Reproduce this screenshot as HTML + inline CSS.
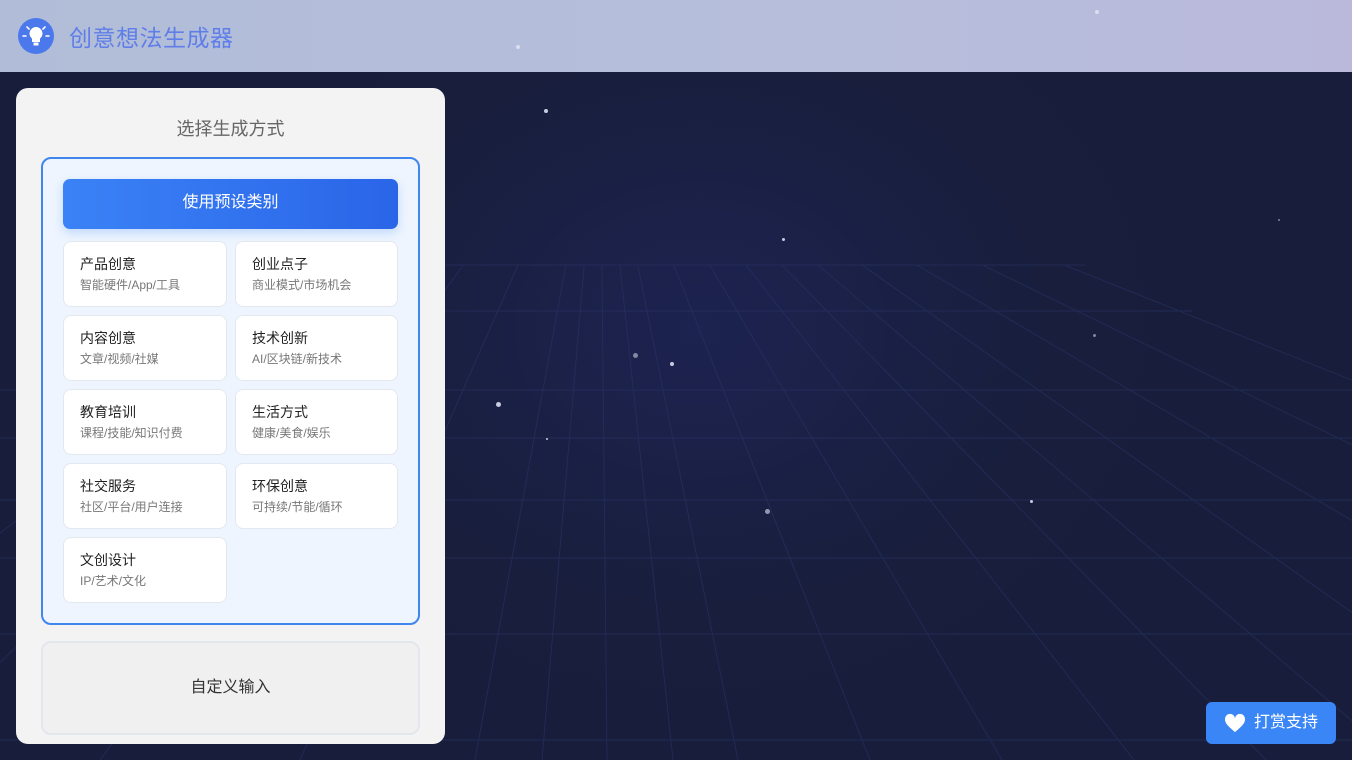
<!DOCTYPE html>
<html><head><meta charset="utf-8"><style>
*{margin:0;padding:0;box-sizing:border-box}
body{width:1352px;height:760px;overflow:hidden;font-family:"Liberation Sans","Noto Sans CJK SC",sans-serif;background:radial-gradient(ellipse 500px 400px at 700px 330px,#1d2350,#181e3c 70%,#171d3a);position:relative}
.hdr{position:absolute;left:0;top:0;width:1352px;height:72px;background:linear-gradient(90deg,#b1bdd8,#b6bedb 60%,#bab9dc)}
.logo{position:absolute;left:18px;top:18px;width:36px;height:36px;border-radius:50%;background:#4b78ea}
.title{position:absolute;left:69px;top:19px;font-size:23px;color:#5f7ee8;letter-spacing:0.5px}
.panel{position:absolute;left:16px;top:88px;width:429px;height:656px;background:#f3f3f3;border-radius:12px}
.ph{position:absolute;top:115px;left:16px;width:429px;text-align:center;font-size:18px;color:#666}
.box{position:absolute;left:41px;top:157px;width:379px;height:468px;border:2px solid #3f86ee;border-radius:10px;background:#eef5fe}
.btn{position:absolute;left:63px;top:179px;width:335px;height:50px;border-radius:7px;background:linear-gradient(90deg,#3b82f6,#2a65e8);color:#fff;font-size:16px;text-align:center;line-height:48px;box-shadow:0 4px 10px rgba(59,130,246,.25)}
.c{position:absolute;width:164px;height:66px;background:#fff;border:1px solid #e3e8ef;border-radius:8px;padding:14px 0 0 16px}
.c b{display:block;font-weight:normal;font-size:14px;color:#222;line-height:16px}
.c i{display:block;font-style:normal;font-size:12px;color:#777;margin-top:6px;line-height:14px}
.cust{position:absolute;left:41px;top:641px;width:379px;height:94px;border:2px solid #e3e6ec;border-radius:10px;background:#f0f0f1;text-align:center;line-height:90px;font-size:16px;color:#333}
.tip{position:absolute;left:1206px;top:702px;width:130px;height:42px;border-radius:6px;background:#3b86f6;color:#fff;font-size:16px;line-height:42px;padding-left:48px}
.dot{position:absolute;border-radius:50%;background:#c8cce0}
</style></head><body>
<svg width="1352" height="760" style="position:absolute;left:0;top:0" stroke="#2a3366" stroke-width="1" opacity="0.6">
<defs><clipPath id="cp"><rect x="0" y="265" width="1352" height="495"/></clipPath></defs>
<g>
<line x1="445" y1="265" x2="1085" y2="265"/>
<line x1="445" y1="311" x2="1192" y2="311"/>
<line x1="0" y1="390" x2="1352" y2="390"/>
<line x1="0" y1="438" x2="1352" y2="438"/>
<line x1="0" y1="500" x2="1352" y2="500"/>
<line x1="0" y1="558" x2="1352" y2="558"/>
<line x1="0" y1="634" x2="1352" y2="634"/>
<line x1="0" y1="740" x2="1352" y2="740"/>
</g>
<g clip-path="url(#cp)">
<line x1="600" y1="79" x2="-300" y2="760"/>
<line x1="600" y1="79" x2="-100" y2="760"/>
<line x1="600" y1="79" x2="100" y2="760"/>
<line x1="600" y1="79" x2="300" y2="760"/>
<line x1="600" y1="79" x2="475" y2="760"/>
<line x1="600" y1="79" x2="542" y2="760"/>
<line x1="600" y1="79" x2="607" y2="760"/>
<line x1="600" y1="79" x2="673" y2="760"/>
<line x1="600" y1="79" x2="738" y2="760"/>
<line x1="600" y1="79" x2="870" y2="760"/>
<line x1="600" y1="79" x2="1002" y2="760"/>
<line x1="600" y1="79" x2="1134" y2="760"/>
<line x1="600" y1="79" x2="1266" y2="760"/>
<line x1="600" y1="79" x2="1398" y2="760"/>
<line x1="600" y1="79" x2="1560" y2="760"/>
<line x1="600" y1="79" x2="1760" y2="760"/>
<line x1="600" y1="79" x2="2000" y2="760"/>
<line x1="600" y1="79" x2="2300" y2="760"/>
</g></svg>
<div class="dot" style="left:544px;top:109px;width:4px;height:4px"></div>
<div class="dot" style="left:782px;top:238px;width:3px;height:3px"></div>
<div class="dot" style="left:633px;top:353px;width:5px;height:5px;opacity:.6"></div>
<div class="dot" style="left:670px;top:362px;width:4px;height:4px"></div>
<div class="dot" style="left:496px;top:402px;width:5px;height:5px"></div>
<div class="dot" style="left:546px;top:438px;width:2px;height:2px"></div>
<div class="dot" style="left:765px;top:509px;width:5px;height:5px;opacity:.7"></div>
<div class="dot" style="left:1030px;top:500px;width:3px;height:3px"></div>
<div class="dot" style="left:1093px;top:334px;width:3px;height:3px;opacity:.6"></div>
<div class="dot" style="left:1278px;top:219px;width:2px;height:2px;opacity:.6"></div>
<div class="hdr"></div>
<div class="dot" style="left:516px;top:45px;width:4px;height:4px;background:#dde"></div>
<div class="dot" style="left:1095px;top:10px;width:4px;height:4px;background:#dde"></div>
<div class="logo"><svg width="36" height="36" viewBox="0 0 36 36"><path d="M18 9a6.5 6.5 0 0 0-4 11.6V24h8v-3.4A6.5 6.5 0 0 0 18 9z" fill="#fff"/><rect x="15.5" y="24.5" width="5" height="3" fill="#fff"/><g stroke="#fff" stroke-width="1.6" stroke-linecap="round"><line x1="5" y1="18" x2="8" y2="18"/><line x1="28" y1="18" x2="31" y2="18"/><line x1="9" y1="9" x2="11" y2="11"/><line x1="27" y1="9" x2="25" y2="11"/></g></svg></div>
<div class="title">创意想法生成器</div>
<div class="panel"></div>
<div class="ph">选择生成方式</div>
<div class="box"></div>
<div class="btn">使用预设类别</div>
<div class="c" style="left:63px;top:241px"><b>产品创意</b><i>智能硬件/App/工具</i></div>
<div class="c" style="left:235px;top:241px;width:163px"><b>创业点子</b><i>商业模式/市场机会</i></div>
<div class="c" style="left:63px;top:315px"><b>内容创意</b><i>文章/视频/社媒</i></div>
<div class="c" style="left:235px;top:315px;width:163px"><b>技术创新</b><i>AI/区块链/新技术</i></div>
<div class="c" style="left:63px;top:389px"><b>教育培训</b><i>课程/技能/知识付费</i></div>
<div class="c" style="left:235px;top:389px;width:163px"><b>生活方式</b><i>健康/美食/娱乐</i></div>
<div class="c" style="left:63px;top:463px"><b>社交服务</b><i>社区/平台/用户连接</i></div>
<div class="c" style="left:235px;top:463px;width:163px"><b>环保创意</b><i>可持续/节能/循环</i></div>
<div class="c" style="left:63px;top:537px"><b>文创设计</b><i>IP/艺术/文化</i></div>
<div class="cust">自定义输入</div>
<div class="tip"><svg style="position:absolute;left:18px;top:11px" width="22" height="20" viewBox="0 0 24 22"><path d="M12 21C5 15 1 11.5 1 7a5.5 5.5 0 0 1 11-1 5.5 5.5 0 0 1 11 1c0 4.5-4 8-11 14z" fill="#fff"/></svg>打赏支持</div>
</body></html>
